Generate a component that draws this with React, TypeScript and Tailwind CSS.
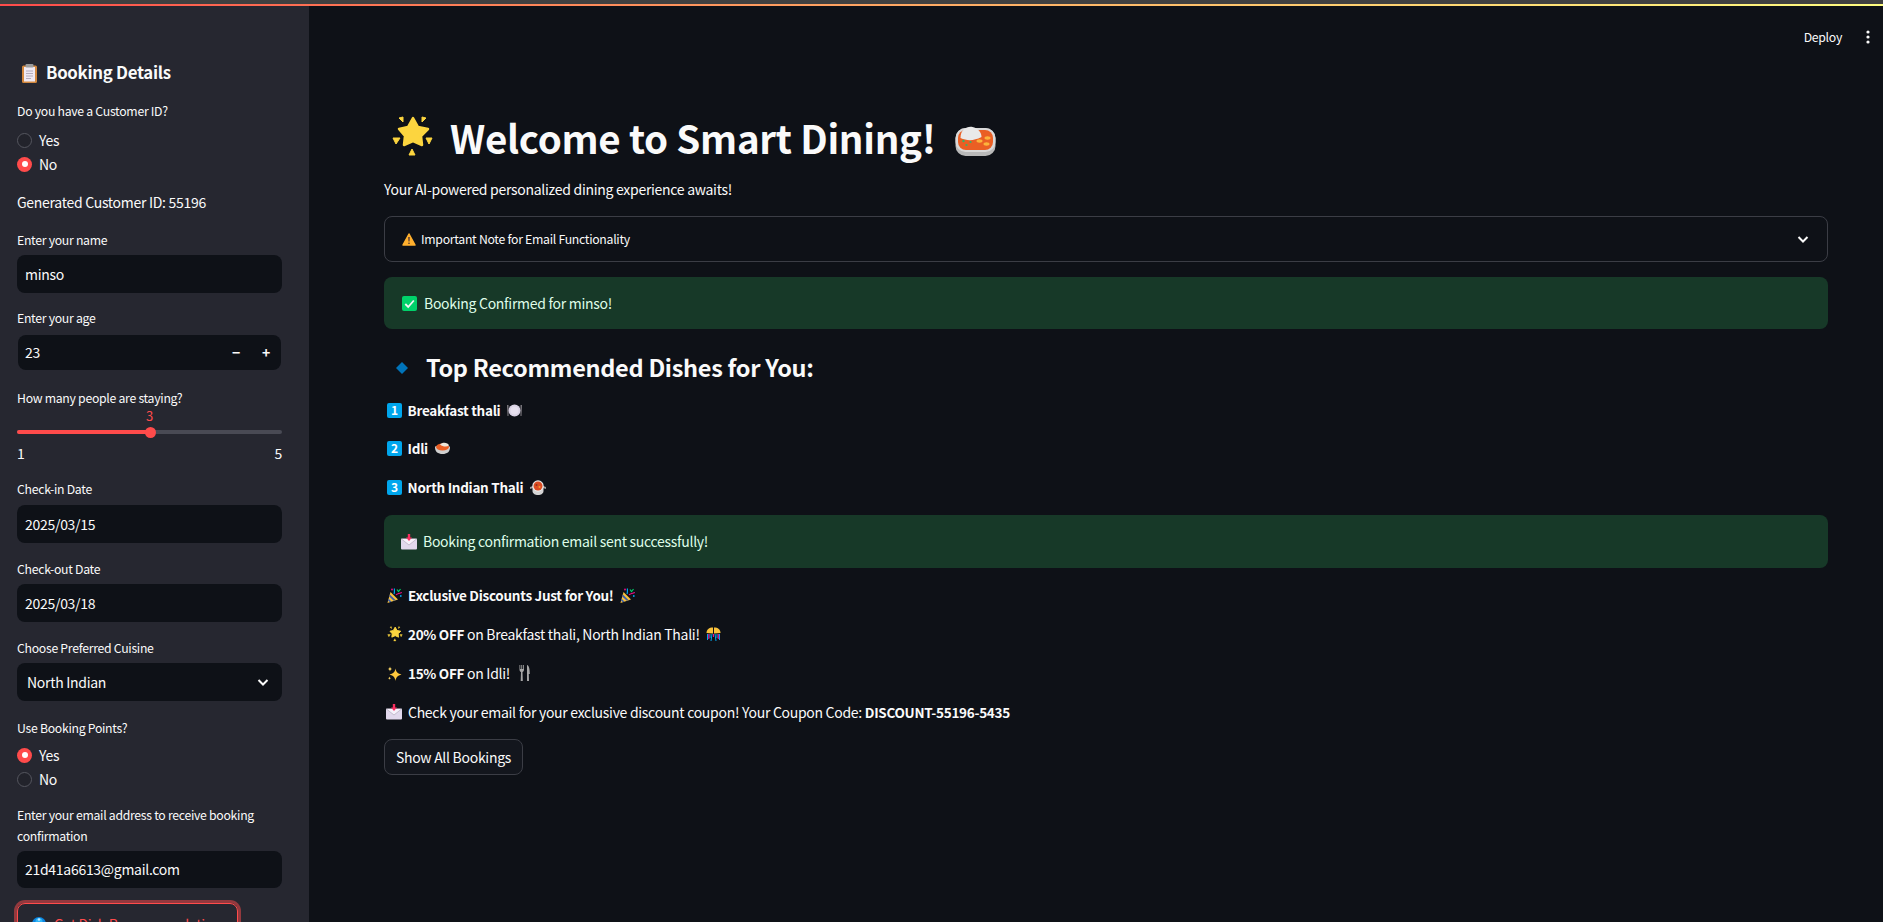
import React from "react";

const font = { fontFamily: '"Noto Sans CJK SC", "Noto Sans", sans-serif' };

type IconProps = { w?: number; className?: string };

function Svg({ w, h, vb, className = "", children }: { w: number; h: number; vb: string; className?: string; children: React.ReactNode }) {
  return (
    <svg width={w} height={h} viewBox={vb} className={`inline-block shrink-0 ${className}`}>
      {children}
    </svg>
  );
}

function GlowStar({ w = 16, className = "" }: IconProps) {
  return (
    <Svg w={w} h={w} vb="6 6 43 43" className={className}>
      <path d="M28 9L33 18L43 20L36 27L37 36L28 32L19 36L20 27L14 20L23 18Z" fill="#fcd53f" stroke="#fcd53f" strokeWidth="2.5" strokeLinejoin="round" />
      <g fill="#fcd53f" stroke="#fcd53f" strokeWidth="1" strokeLinejoin="round">
        <path d="M14 9L18 8L18 13Z" />
        <path d="M37 8L41 9L37 13Z" />
        <path d="M8 29L15 29L11 35Z" />
        <path d="M41 29L47 29L44 35Z" />
        <path d="M27 40L24 46L30 46Z" />
      </g>
    </Svg>
  );
}

function Curry({ w = 40, className = "" }: IconProps) {
  return (
    <Svg w={w} h={(w * 30) / 41} vb="11.5 18 41 30" className={className}>
      <rect x="12" y="20" width="40" height="28" rx="10" fill="#b9b9b9" />
      <rect x="12" y="20" width="40" height="24" rx="10" fill="#d9d9d9" />
      <rect x="14.5" y="22" width="35" height="20" rx="8" fill="#ea5f24" />
      <path d="M17 30C17 22 23 18 29 19C34 20 38 24 38 29C30 33 24 33 17 30Z" fill="#e9e9e9" />
      <circle cx="20" cy="33" r="1.2" fill="#2fb56b" />
      <circle cx="27" cy="34" r="1.1" fill="#2fb56b" />
      <circle cx="23" cy="37" r="1.1" fill="#2fb56b" />
      <ellipse cx="36" cy="33" rx="3" ry="1.7" fill="#fcb33b" />
      <ellipse cx="44" cy="30" rx="3" ry="1.7" fill="#fcb33b" />
      <ellipse cx="43" cy="36" rx="3" ry="1.7" fill="#fcb33b" />
    </Svg>
  );
}

function Plate({ className = "" }: IconProps) {
  return (
    <Svg w={15} h={13} vb="0 0 15 13" className={className}>
      <path d="M0 1L1.5 1L1.5 12L0.5 12Z" fill="#7d7a80" />
      <path d="M13.5 1L15 1L14.5 12L13.5 12Z" fill="#7d7a80" />
      <circle cx="7.5" cy="6.5" r="6" fill="#d9d2e4" />
      <circle cx="7.5" cy="6.5" r="4" fill="#e6e0ee" />
    </Svg>
  );
}

function SmallCurry({ className = "" }: IconProps) {
  return (
    <Svg w={15} h={12} vb="0 0 15 12" className={className}>
      <path d="M0 5C0 3 14.500 3 15 5C15 10 12 12 7.500 12C3 12 0 10 0 5Z" fill="#cfcfcf" />
      <ellipse cx="7.500" cy="5" rx="6.500" ry="3.500" fill="#ea5f24" />
      <path d="M5 2.500C7 0 13 0 14 3.500C12 5 8 5 5 2.500Z" fill="#ece6da" />
    </Svg>
  );
}

function Pot({ className = "" }: IconProps) {
  return (
    <Svg w={16} h={15} vb="0 0 16 15" className={className}>
      <path d="M0 7L3 6L3 8L0 9ZM16 7L13 6L13 8L16 9Z" fill="#9c9c9c" />
      <path d="M2.500 6H13.500V11C13.500 13.500 11 15 8 15C5 15 2.500 13.500 2.500 11Z" fill="#d4d4d4" />
      <circle cx="8" cy="6" r="5.700" fill="#e9e9e9" />
      <circle cx="8" cy="6" r="4.500" fill="#dc4c22" />
      <circle cx="6.500" cy="5" r="1" fill="#8a3a1d" />
      <circle cx="9.500" cy="7" r="1" fill="#f59b34" />
    </Svg>
  );
}

function Keycap({ n }: { n: string }) {
  return (
    <span className="inline-flex w-[15px] h-[15px] rounded-[2px] bg-[#00a6ed] items-center justify-center text-[12px] font-bold text-white shrink-0 tracking-normal leading-none">
      {n}
    </span>
  );
}

function Envelope({ className = "" }: IconProps) {
  return (
    <Svg w={16} h={16} vb="0 0 16 16" className={className}>
      <rect x="0" y="4.500" width="16" height="11" rx="1" fill="#e1d8ec" />
      <path d="M0.500 5L8 11L15.500 5" fill="#f6f1fb" stroke="#b4acbc" strokeWidth="0.700" />
      <path d="M6.800 0H9.200V3.500H11L8 7L5 3.500H6.800Z" fill="#f92f60" />
    </Svg>
  );
}

function Popper({ className = "" }: IconProps) {
  return (
    <Svg w={15} h={15} vb="0 0 15 15" className={className}>
      <path d="M3.500 4L11 11.500L0.500 15Z" fill="#f9c23c" />
      <path d="M2.900 6.500L8.500 11.900L6.800 12.800L2.200 8.500ZM1.500 10.500L4.500 13.800L2.800 14.300L1 12.500Z" fill="#3f5fa8" />
      <path d="M7 6C8 3.500 7 2.500 7.500 0.500" stroke="#00a6ed" strokeWidth="1.200" fill="none" />
      <path d="M9 7C10.500 5 12 6 14.800 4.500" stroke="#f70a8d" strokeWidth="1.200" fill="none" />
      <path d="M10 1.500L11.500 3.500L13.500 1" stroke="#00d26a" strokeWidth="1.200" fill="none" />
      <circle cx="5" cy="1.500" r="0.900" fill="#f70a8d" />
      <circle cx="13.800" cy="8" r="0.900" fill="#00a6ed" />
    </Svg>
  );
}

function Confetti({ className = "" }: IconProps) {
  return (
    <Svg w={15} h={14} vb="0 0 15 14" className={className}>
      <path d="M0.500 6C0.500 2.500 3 0.500 7 0.500L7 6.500Z" fill="#f9c23c" />
      <path d="M14.500 6C14.500 2.500 12 0.500 8 0.500L8 6.500Z" fill="#f9c23c" />
      <path d="M1.500 7V13M4 7V11M6 7L5 14M9 7L10 14M11 7V11M13.500 7V13" stroke="#00a6ed" strokeWidth="1" />
      <path d="M2.800 7V12M7.500 7V10M12.300 7V12" stroke="#f70a8d" strokeWidth="1.100" />
    </Svg>
  );
}

function Sparkles({ className = "" }: IconProps) {
  return (
    <Svg w={15} h={15} vb="0 0 15 15" className={className}>
      <path d="M8.500 2.500C9.200 6 10.500 7.500 14.500 8.500C10.500 9.500 9.200 11 8.500 15C7.800 11 6.500 9.500 2.500 8.500C6.500 7.500 7.800 6 8.500 2.500Z" fill="#ffc83d" />
      <path d="M3 0.500C3.300 2 3.800 2.600 5.300 3C3.800 3.400 3.300 4 3 5.500C2.700 4 2.200 3.400 0.700 3C2.200 2.600 2.700 2 3 0.500Z" fill="#ffd966" />
      <path d="M2.500 10.500C2.700 11.500 3 11.800 4 12.200C3 12.500 2.700 12.900 2.500 14C2.300 12.900 2 12.500 1 12.200C2 11.800 2.300 11.500 2.500 10.500Z" fill="#ffd966" />
    </Svg>
  );
}

function ForkKnife({ className = "" }: IconProps) {
  return (
    <Svg w={11} h={16} vb="0 0 11 16" className={className}>
      <path d="M0.500 0V4.500C0.500 6 1.300 6.600 2 7L1.700 16H3.800L3.500 7C4.200 6.600 5 6 5 4.500V0H4.200V4H3.200V0H2.300V4H1.300V0Z" fill="#a6a6a6" />
      <path d="M8 0C9.800 0.500 10.800 3 10.800 9H9.800L10 16H8Z" fill="#a6a6a6" />
    </Svg>
  );
}

function Clipboard({ className = "" }: IconProps) {
  return (
    <Svg w={15} h={19} vb="0 0 15 19" className={className}>
      <rect x="0" y="1.500" width="15" height="17.500" rx="1.500" fill="#d3883e" />
      <rect x="2" y="3" width="11" height="14.500" fill="#efe9f3" />
      <rect x="3.500" y="0" width="8" height="3.500" rx="1" fill="#9b9b9b" />
      <path d="M4 7H11M4 9.500H11M4 12H11M4 14.500H9" stroke="#b4acbc" strokeWidth="1" />
    </Svg>
  );
}

function Warning({ className = "" }: IconProps) {
  return (
    <Svg w={14} h={13} vb="0 0 14 13" className={className}>
      <path d="M7 1L13 12H1Z" fill="#ffb02e" stroke="#ffb02e" strokeWidth="1.500" strokeLinejoin="round" />
      <path d="M6.300 4H7.700L7.500 8.500H6.500Z" fill="#402a32" />
      <circle cx="7" cy="10.300" r="0.800" fill="#402a32" />
    </Svg>
  );
}

function CheckBox({ className = "" }: IconProps) {
  return (
    <Svg w={15} h={15} vb="0 0 15 15" className={className}>
      <rect width="15" height="15" rx="2" fill="#00d26a" />
      <path d="M3.300 8L6.200 11L11.800 4.500" fill="none" stroke="#f4f4f4" strokeWidth="1.800" />
    </Svg>
  );
}

function Diamond({ className = "" }: IconProps) {
  return (
    <Svg w={12} h={12} vb="0 0 12 12" className={className}>
      <path d="M6 0L12 6L6 12L0 6Z" fill="#0074ba" />
    </Svg>
  );
}

function Ball({ className = "" }: IconProps) {
  return (
    <Svg w={14} h={14} vb="0 0 14 14" className={className}>
      <circle cx="7" cy="7" r="7" fill="#0a84e0" />
      <circle cx="7" cy="4.500" r="3.500" fill="#2fb4f5" />
      <circle cx="7" cy="2.500" r="1.300" fill="#bde8ff" />
    </Svg>
  );
}

function Chevron() {
  return (
    <svg width="16" height="16" viewBox="0 0 16 16" fill="none" stroke="#fafafa" strokeWidth="2" className="shrink-0">
      <path d="M3.500 6l4.500 4.500L12.500 6" />
    </svg>
  );
}

function Label({ children, className = "" }: { children: React.ReactNode; className?: string }) {
  return <div className={`text-[12.25px] leading-[20px] h-[20px] text-[#fafafa] ${className}`}>{children}</div>;
}

function Field({ value, className = "" }: { value: string; className?: string }) {
  return (
    <div className={`h-[38px] rounded-[8px] bg-[#0e1117] pl-[8px] flex items-center text-[14px] text-[#fafafa] ${className}`}>
      {value}
    </div>
  );
}

function Radio({ label, on }: { label: string; on?: boolean }) {
  return (
    <div className="h-[24px] flex items-center gap-[7px] text-[14px] text-[#fafafa]">
      {on ? (
        <span className="w-[15px] h-[15px] rounded-full bg-[#ff4b4b] flex items-center justify-center">
          <span className="w-[6px] h-[6px] rounded-full bg-white" />
        </span>
      ) : (
        <span className="w-[15px] h-[15px] rounded-full border border-[#55565f] bg-[#22232b]" />
      )}
      {label}
    </div>
  );
}

function Success({ children, className = "" }: { children: React.ReactNode; className?: string }) {
  return (
    <div className={`rounded-[8px] bg-[#173928] text-[#dffde9] text-[14px] pl-[18px] flex items-center gap-[7px] ${className}`}>
      {children}
    </div>
  );
}

function Line({ children, className = "" }: { children: React.ReactNode; className?: string }) {
  return <div className={`h-[24px] flex items-center whitespace-pre text-[14px] text-[#fafafa] ${className}`}>{children}</div>;
}

function Strong({ children }: { children: React.ReactNode }) {
  return <b className="font-bold text-[13.5px]">{children}</b>;
}

export default function App() {
  return (
    <div style={font} className="h-screen w-full overflow-hidden bg-[#0e1117] flex flex-col tracking-[-0.018em]">
      <div className="h-[4px] bg-[#404040] shrink-0" />
      <div className="h-[2px] shrink-0 bg-gradient-to-r from-[#ff4b4b] to-[#fffd80]" />
      <div className="flex flex-1 min-h-0">
        <aside className="w-[309px] shrink-0 bg-[#262730] pl-[17px] pr-[27px] pt-[52px] overflow-hidden">
          <div className="h-[30px] flex items-center pl-[5px] gap-[9px] text-[16.8px] font-bold text-[#fafafa]">
            <Clipboard />
            Booking Details
          </div>
          <Label className="mt-[13px]">Do you have a Customer ID?</Label>
          <div className="mt-[7px]">
            <Radio label="Yes" />
            <Radio label="No" on />
          </div>
          <div className="mt-[14px] h-[24px] leading-[24px] text-[14px] text-[#fafafa]">Generated Customer ID: 55196</div>
          <Label className="mt-[16px]">Enter your name</Label>
          <Field value="minso" className="mt-[5px]" />
          <Label className="mt-[15px]">Enter your age</Label>
          <div className="mt-[7px] mx-[1px] h-[35px] rounded-[8px] bg-[#0e1117] pl-[7px] flex items-center text-[14px] text-[#fafafa]">
            <span className="flex-1">23</span>
            <span className="w-[30px] text-center font-bold">−</span>
            <span className="w-[30px] text-center font-bold">+</span>
          </div>
          <Label className="mt-[18px]">How many people are staying?</Label>
          <div className="mt-[1px] h-[14px] leading-[14px] text-[13px] text-[#ff4b4b] text-center">3</div>
          <div className="mt-[7px] relative h-[4px] rounded-full bg-[#494a54]">
            <div className="h-[4px] w-1/2 rounded-full bg-[#ff4b4b]" />
            <div className="absolute left-1/2 top-[-3.500px] -ml-[5px] w-[11px] h-[11px] rounded-full bg-[#ff4b4b]" />
          </div>
          <div className="mt-[9px] h-[20px] flex justify-between text-[14px] leading-[20px] text-[#fafafa]">
            <span>1</span>
            <span>5</span>
          </div>
          <Label className="mt-[16px]">Check-in Date</Label>
          <Field value="2025/03/15" className="mt-[6px]" />
          <Label className="mt-[16px]">Check-out Date</Label>
          <Field value="2025/03/18" className="mt-[5px]" />
          <Label className="mt-[16px]">Choose Preferred Cuisine</Label>
          <div className="mt-[5px] h-[38px] rounded-[8px] bg-[#0e1117] pl-[10px] pr-[11px] flex items-center justify-between text-[14px] text-[#fafafa]">
            North Indian
            <Chevron />
          </div>
          <Label className="mt-[17px]">Use Booking Points?</Label>
          <div className="mt-[5px]">
            <Radio label="Yes" on />
            <Radio label="No" />
          </div>
          <div className="mt-[14px] text-[12.25px] leading-[21px] text-[#fafafa]">
            Enter your email address to receive booking
            <br />
            confirmation
          </div>
          <Field value="21d41a6613@gmail.com" className="mt-[4px] !h-[37px]" />
          <div className="mt-[15px] w-[221px] h-[42px] rounded-[8px] border border-[#ff4b4b] shadow-[0_0_0_3px_rgba(255,75,75,0.5)] flex items-center pl-[14px] gap-[8px] text-[14px] whitespace-nowrap text-[#ff4b4b]">
            <Ball />
            Get Dish Recommendations
          </div>
        </aside>
        <main className="flex-1 min-w-0 pl-[75px] pr-[55px] pt-[21px]">
          <div className="h-[20px] -mr-[42px] flex items-center justify-end text-[12.25px] text-[#fafafa]">
            Deploy
            <svg className="ml-[24px]" width="4" height="14" viewBox="0 0 4 14" fill="#fafafa">
              <circle cx="2" cy="2" r="1.600" />
              <circle cx="2" cy="7" r="1.600" />
              <circle cx="2" cy="12" r="1.600" />
            </svg>
          </div>
          <h1 className="mt-[61px] h-[60px] flex items-center whitespace-pre pl-[7px] text-[38.5px] font-bold text-[#fafafa]">
            <GlowStar w={43} className="mr-[16px] -mt-[4px]" />
            Welcome to Smart Dining!
            <Curry w={41} className="ml-[19px] mt-[5px]" />
          </h1>
          <Line className="mt-[9px]">Your AI-powered personalized dining experience awaits!</Line>
          <div className="mt-[15px] h-[46px] rounded-[8px] border border-[#3b3d45] pl-[17px] pr-[16px] flex items-center justify-between text-[12.25px] text-[#fafafa]">
            <span className="flex items-center gap-[5px]">
              <Warning />
              Important Note for Email Functionality
            </span>
            <Chevron />
          </div>
          <Success className="mt-[15px] h-[52px]">
            <CheckBox />
            Booking Confirmed for minso!
          </Success>
          <h2 className="mt-[19px] h-[40px] flex items-center pl-[12px] gap-[18px] text-[23.5px] font-bold text-[#fafafa]">
            <Diamond />
            Top Recommended Dishes for You:
          </h2>
          <Line className="mt-[10px] pl-[3px]">
            <Keycap n="1" />
            <Strong>{"  Breakfast thali"}</Strong>
            <Plate className="ml-[7px]" />
          </Line>
          <Line className="mt-[14px] pl-[3px]">
            <Keycap n="2" />
            <Strong>{"  Idli"}</Strong>
            <SmallCurry className="ml-[7px]" />
          </Line>
          <Line className="mt-[15px] pl-[3px]">
            <Keycap n="3" />
            <Strong>{"  North Indian Thali"}</Strong>
            <Pot className="ml-[7px]" />
          </Line>
          <Success className="mt-[16px] h-[53px] !gap-[6px] !pl-[17px]">
            <Envelope />
            Booking confirmation email sent successfully!
          </Success>
          <Line className="mt-[15px] pl-[3px] gap-[6px]">
            <Popper />
            <Strong>Exclusive Discounts Just for You!</Strong>
            <Popper />
          </Line>
          <Line className="mt-[15px] pl-[3px]">
            <GlowStar w={16} className="mr-[5px]" />
            <Strong>20% OFF</Strong>
            {" on Breakfast thali, North Indian Thali!"}
            <Confetti className="ml-[6px]" />
          </Line>
          <Line className="mt-[15px] pl-[3px]">
            <Sparkles className="mr-[6px]" />
            <Strong>15% OFF</Strong>
            {" on Idli!"}
            <ForkKnife className="ml-[9px]" />
          </Line>
          <Line className="mt-[15px] pl-[2px]">
            <Envelope className="mr-[6px]" />
            {"Check your email for your exclusive discount coupon! Your Coupon Code: "}
            <Strong>DISCOUNT-55196-5435</Strong>
          </Line>
          <div className="mt-[15px] w-[139px] h-[36px] rounded-[8px] border border-[#3b3d45] bg-[#13161d] flex items-center justify-center text-[14px] whitespace-nowrap text-[#fafafa]">
            Show All Bookings
          </div>
        </main>
      </div>
    </div>
  );
}
